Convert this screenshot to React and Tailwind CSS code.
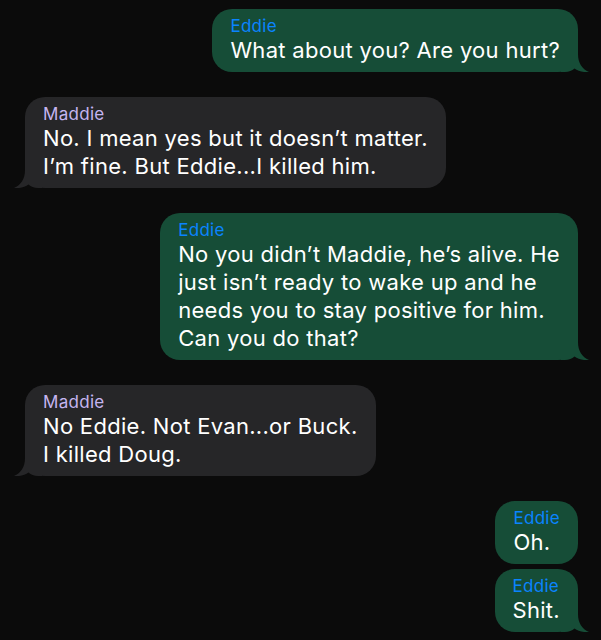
import React from 'react';

const messages = [
    { from: 'Eddie', me: true, lines: ['What about you? Are you hurt?'], tail: true },
    { from: 'Maddie', me: false, lines: ['No. I mean yes but it doesn’t matter.', 'I’m fine. But Eddie...I killed him.'], tail: true },
    {
        from: 'Eddie',
        me: true,
        lines: [
            'No you didn’t Maddie, he’s alive. He',
            'just isn’t ready to wake up and he',
            'needs you to stay positive for him.',
            'Can you do that?',
        ],
        tail: true,
    },
    { from: 'Maddie', me: false, lines: ['No Eddie. Not Evan...or Buck.', 'I killed Doug.'], tail: true },
    { from: 'Eddie', me: true, lines: ['Oh.'], tail: false, tight: true },
    { from: 'Eddie', me: true, lines: ['Shit.'], tail: true },
];

const Tail = ({ me, color }) => (
    <svg
        width="28"
        height="24"
        viewBox="0 0 28 24"
        className={me ? 'absolute bottom-0 -right-[11px]' : 'absolute bottom-0 -left-[11px] -scale-x-100'}
    >
        <path d="M0 0 H17 V6 C17 15 21 21 28 24 C22 24.6 17 23 13.5 20.5 C11 22.5 8 24 4 24 H0 Z" fill={color} />
    </svg>
);

const Bubble = ({ msg }) => {
    const bg = msg.me ? '#164d37' : '#262628';
    return (
        <div className={msg.me ? 'flex justify-end' : 'flex justify-start'}>
            <div
                className={`relative rounded-[20px] px-[18px] pt-[8px] pb-[8px] ${msg.me ? 'bg-[#164d37]' : 'bg-[#262628]'}`}
            >
                {msg.tail && <Tail me={msg.me} color={bg} />}
                <div className="relative">
                    <div className={`text-[17px] leading-[19px] tracking-[0.3px] ${msg.me ? 'text-[#0a84ff]' : 'text-[#c5b5f0]'}`}>
                        {msg.from}
                    </div>
                    {msg.lines.map((l, i) => (
                        <div key={i} className="text-[22px] leading-[28px] tracking-[0.3px] text-white whitespace-nowrap">
                            {l}
                        </div>
                    ))}
                </div>
            </div>
        </div>
    );
};

export default function App() {
    return (
        <div className="min-h-[640px] w-[601px] bg-[#0b0b0b] pt-[9px] pl-[25px] pr-[23px] font-['Inter',sans-serif]">
            <div className="flex flex-col">
                {messages.map((m, i) => (
                    <div key={i} className={i === 0 ? '' : messages[i - 1].tight ? 'mt-[5px]' : 'mt-[25px]'}>
                        <Bubble msg={m} />
                    </div>
                ))}
            </div>
        </div>
    );
}
